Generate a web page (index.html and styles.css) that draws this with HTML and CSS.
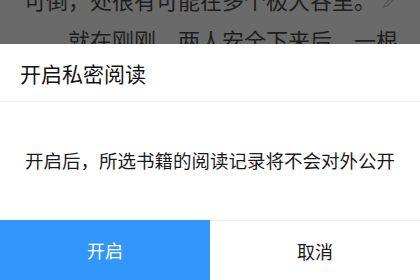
FILE: index.html
```html
<!DOCTYPE html>
<html lang="zh-CN">
<head>
  <meta charset="UTF-8">
  <meta name="viewport" content="width=device-width, initial-scale=1.0">
  <title>开启私密阅读</title>
  <link rel="stylesheet" href="styles.css">
</head>
<body>

<div class="reader">
  <p class="line first">可倒，处很有可能在多个极大谷里。<svg class="edit" width="12" height="12" viewBox="0 0 12 12"><path d="M2 10 L3 7 L8.5 1.5 L10.5 3.5 L5 9 Z" fill="none" stroke="#555" stroke-width="1.2"/></svg></p>
  <p class="line indent">就在刚刚，两人安全下来后，一根</p>
</div>

<div class="dialog">
  <div class="dialog-title">开启私密阅读</div>
  <div class="dialog-body">开启后，所选书籍的阅读记录将不会对外公开</div>
  <div class="dialog-actions">
    <button class="btn primary">开启</button>
    <button class="btn">取消</button>
  </div>
</div>

</body>
</html>
```

FILE: styles.css
```css
* {
  margin: 0;
  padding: 0;
  box-sizing: border-box;
  font-family: "Noto Sans CJK SC", "Noto Sans", sans-serif;
}

body {
  width: 420px;
  height: 280px;
  overflow: hidden;
  background: #6a6a6a;
  display: flex;
  flex-direction: column;
}

/* dimmed reading page behind the dialog */
.reader {
  height: 44px;
  overflow: hidden;
  padding-left: 24px;
  color: #1e1e1e;
}

.line {
  font-size: 22px;
  line-height: 40px;
  white-space: nowrap;
}

.line.first {
  margin-top: -21px;
}

.line.indent {
  padding-left: 44px;
}

.edit {
  margin-left: 6px;
  vertical-align: middle;
}

.dialog {
  flex: 1;
  background: #fff;
  display: flex;
  flex-direction: column;
}

.dialog-title {
  height: 58px;
  padding-left: 20px;
  display: flex;
  align-items: center;
  font-size: 21px;
  color: #111;
  border-bottom: 1px solid #f0f0f0;
}

.dialog-body {
  flex: 1;
  display: flex;
  align-items: center;
  justify-content: center;
  font-size: 18.5px;
  color: #1a1a1a;
  padding-bottom: 2px;
}

.dialog-actions {
  height: 60px;
  display: flex;
  border-top: 1px solid #ececec;
}

.btn {
  flex: 1;
  border: none;
  background: #fff;
  font-size: 18px;
  color: #1a1a1a;
  cursor: pointer;
}

.btn.primary {
  background: #3396fb;
  color: #fff;
  margin-top: -1px;
}
```
